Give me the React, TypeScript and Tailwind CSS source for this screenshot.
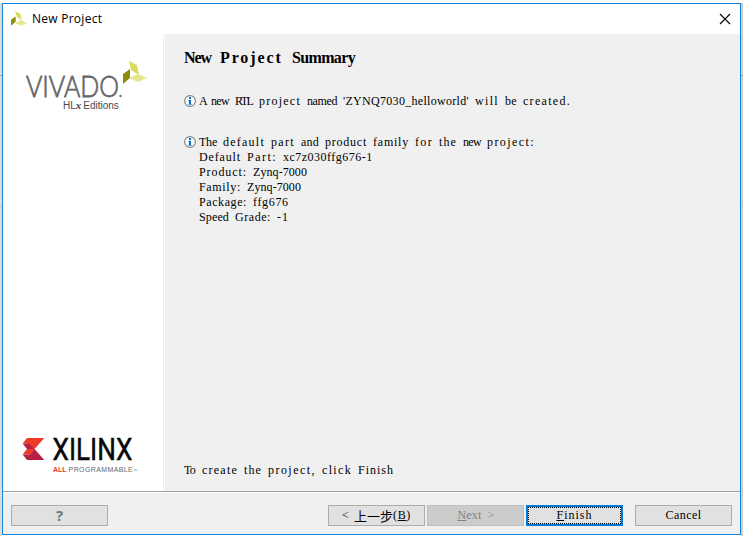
import { Fragment, type ReactNode } from 'react';

// Glyph advances of the serif face in thousandths of an em; other glyphs are 500.
const advances: Record<string, number> = {
  a: 444, c: 444, e: 444, f: 333, i: 278, j: 278, l: 278, m: 778, r: 333, s: 389, t: 278, w: 722, z: 444,
  A: 722, B: 667, C: 667, D: 722, F: 556, G: 722, L: 611, N: 722, P: 556, Q: 722, R: 667, S: 556, T: 611,
  Y: 722, Z: 611, '.': 250, ',': 250, ':': 278, '-': 333, "'": 180, '(': 333, ')': 333, '<': 564, '>': 564,
};
const boldAdvances: Record<string, number> = {
  a: 500, c: 444, e: 444, j: 333, m: 833, r: 444, t: 333, u: 556, w: 722, N: 722, P: 611, S: 556,
};

// Sets every word on a fixed character grid, so columns line up like a terminal face.
function Grid({ text, cell = 6, size = 12, bold = false, mnemonic = '' }: { text: string; cell?: number; size?: number; bold?: boolean; mnemonic?: string }) {
  const table = bold ? boldAdvances : advances;
  return (
    <>
      {text.split(' ').map((word, i) => {
        const natural = [...word].reduce((sum, c) => sum + ((table[c] ?? 500) * size) / 1000, 0);
        const spacing = word ? (word.length * cell - natural) / word.length : 0;
        const at = mnemonic ? word.indexOf(mnemonic) : -1;
        return (
          <Fragment key={i}>
            {i > 0 && <span className="inline-block" style={{ width: cell }}> </span>}
            <span className="inline-block" style={{ width: word.length * cell, letterSpacing: spacing }}>
              {at < 0 ? word : <>{word.slice(0, at)}<u>{mnemonic}</u>{word.slice(at + 1)}</>}
            </span>
          </Fragment>
        );
      })}
    </>
  );
}

function Line({ text, mnemonic, className = 'text-black' }: { text: string; mnemonic?: string; className?: string }) {
  return (
    <div className={`h-[15px] whitespace-pre font-['Liberation_Serif',serif] text-[12px] leading-[15px] ${className}`}>
      <Grid text={text} mnemonic={mnemonic} />
    </div>
  );
}

function Mark({ className }: { className: string }) {
  return (
    <svg viewBox="0 0 24 22" className={className}>
      <path d="M6 0l8 4 2 9-7-4z" fill="#d8dc5c" />
      <path d="M0 13l7-5v8l-7 6z" fill="#8f8c0c" />
      <path d="M6 18l9-5 9 5-9 4z" fill="#e6e890" />
    </svg>
  );
}

function Info() {
  return (
    <svg viewBox="0 0 12 12" className="mt-px h-3 w-3 shrink-0">
      <circle cx="6" cy="6" r="5.400" fill="#f7fbfd" stroke="#7e8488" strokeWidth="1.100" />
      <path d="M5 2h2v2H5zM5 5h2v5H5z" fill="#0a6cc4" />
      <path d="M4 5h1v1H4zM4 9h4v1H4z" fill="#6fa9d8" />
    </svg>
  );
}

function Button({ children, className = 'border-[#adadad] bg-[#e1e1e1]' }: { children: ReactNode; className?: string }) {
  return (
    <button className={`flex h-[21px] w-[97px] shrink-0 items-center justify-center border ${className}`}>
      {children}
    </button>
  );
}

export default function App() {
  return (
    <div className="flex h-[536px] w-[743px] flex-col overflow-hidden bg-white">
      <div className="h-[3px] shrink-0" />
      <div className="flex h-[533px]">
        <div className="w-[2px] bg-[#dcdcdc]">
          <div className="mt-[72px] h-px bg-[#acacac]" />
          <div className="mt-[130px] h-px bg-[#a9c4dc]" />
        </div>
        <main className="flex h-[532px] w-[739px] flex-col border border-[#1883d7] bg-[#f0f0f0]">
          <header className="flex h-[30px] shrink-0 items-center bg-white pr-[9px]">
            <Mark className="-mt-[2px] ml-2 h-[15px] w-4" />
            <span className="ml-[5px] flex-1 font-['Open_Sans','Noto_Sans',sans-serif] text-[12px] tracking-[0.260px] text-black">New Project</span>
            <svg viewBox="0 0 12 12" className="-mt-px h-3 w-3">
              <path d="M1 1l10 10M11 1L1 11" stroke="#000" strokeWidth="1.100" />
            </svg>
          </header>
          <div className="flex h-[457px] shrink-0">
            <aside className="flex w-[161px] shrink-0 flex-col justify-between border-r border-[#eeeeee] bg-white">
              <div>
                <svg viewBox="0 0 159 64" className="h-16 w-[159px] overflow-visible">
                  <text x="23" y="63" fill="#67686b" stroke="#67686b" strokeWidth="0.800" textLength="93" lengthAdjust="spacingAndGlyphs" className="font-['Lato',sans-serif] text-[29px] font-light">VIVADO</text>
                  <circle cx="117.500" cy="62" r="1.200" fill="#707173" />
                  <g transform="translate(120 27)">
                    <path d="M6 0l8 4 2 10-8-5z" fill="#d8dc5c" />
                    <path d="M0 13l7-5v9l-7 6z" fill="#8f8c0c" />
                    <path d="M6 17l9-4 9 4-9 4z" fill="#e6e890" />
                  </g>
                </svg>
                <div className="flex h-[14px] items-baseline pl-[60px] font-['Liberation_Sans',sans-serif] text-[10px] leading-[14px] text-[#46484a]">
                  <span>HL</span>
                  <span className="font-['Liberation_Serif',serif] text-[11px] font-bold italic">x</span>
                  <span className="ml-[2px]">Editions</span>
                </div>
              </div>
              <div className="h-[60px]">
                <div className="flex h-[35px]">
                  <svg viewBox="0 0 48 35" className="h-[35px] w-12">
                    <path d="M24 7h17.300L31.500 18 24 12.500h-4.300z" fill="#ee3a29" />
                    <path d="M19.700 12.500h6l6 5.500H24z" fill="#b62045" />
                    <path d="M24 18h8l-5 5.500h-7.300z" fill="#ee3a29" />
                    <path d="M19.700 23.500H27l4.500-5.500 9.800 11H24z" fill="#b62045" />
                  </svg>
                  <svg viewBox="0 0 90 35" className="h-[35px] w-[90px] overflow-visible">
                    <text x="1.500" y="29" fill="#080808" stroke="#080808" strokeWidth="0.500" textLength="80" lengthAdjust="spacingAndGlyphs" className="font-['Roboto',sans-serif] text-[31px]">XILINX</text>
                  </svg>
                </div>
                <div className="flex h-[10px] items-baseline pl-[50px] font-['Liberation_Sans',sans-serif] text-[7px] leading-[8px] text-[#66686a]">
                  <span className="font-bold text-[#e63b2e]">ALL</span>
                  <span className="ml-[2px] tracking-[0.380px]">PROGRAMMABLE</span>
                  <span className="text-[4px]">™</span>
                </div>
              </div>
            </aside>
            <section className="flex flex-1 flex-col border-l border-white pl-[19px]">
              <h1 className="mt-[15px] h-[18px] whitespace-pre font-['Liberation_Serif',serif] text-[16px] leading-[18px] font-bold text-black">
                <Grid text="New Project Summary" cell={9} size={16} bold />
              </h1>
              <div className="mt-[27px] flex gap-[3px]">
                <Info />
                <Line text="A new RTL project named 'ZYNQ7030_helloworld' will be created." />
              </div>
              <div className="mt-[26px] flex gap-[3px]">
                <Info />
                <div>
                  <Line text="The default part and product family for the new project:" />
                  <Line text="Default Part: xc7z030ffg676-1" />
                  <Line text="Product: Zynq-7000" />
                  <Line text="Family: Zynq-7000" />
                  <Line text="Package: ffg676" />
                  <Line text="Speed Grade: -1" />
                </div>
              </div>
              <div className="mt-auto mb-[13px]"><Line text="To create the project, click Finish" /></div>
            </section>
          </div>
          <footer className="flex flex-1 items-start border-t border-[#a0a0a0] px-2 shadow-[inset_0_1px_0_white]">
            <div className="mt-[13px] flex w-full">
              <Button>
                <span className="font-['Open_Sans',sans-serif] text-[15px] leading-none font-bold text-[#6b787f]">?</span>
              </Button>
              <div className="ml-auto flex gap-[2px]">
                <Button>
                  <Line text="< " />
                  <span className="font-['Noto_Sans_CJK_SC',sans-serif] text-[13px] leading-[15px]">上一步</span>
                  <Line text="(B)" mnemonic="B" />
                </Button>
                <Button className="border-[#bfbfbf] bg-[#cccccc]">
                  <Line text="Next >" mnemonic="N" className="text-[#838383]" />
                </Button>
                <Button className="border-2! border-[#0078d7] bg-[#e1e1e1]">
                  <span className="flex h-[17px] w-[93px] items-center justify-center border border-dotted border-black">
                    <Line text="Finish" mnemonic="F" />
                  </span>
                </Button>
              </div>
              <div className="ml-3"><Button><Line text="Cancel" /></Button></div>
            </div>
          </footer>
        </main>
        <div className="w-[2px] bg-[#cecece]">
          <div className="mt-[72px] h-px bg-[#a0a0a0]" />
          <div className="mt-[130px] h-px bg-[#a9c4dc]" />
        </div>
      </div>
    </div>
  );
}
